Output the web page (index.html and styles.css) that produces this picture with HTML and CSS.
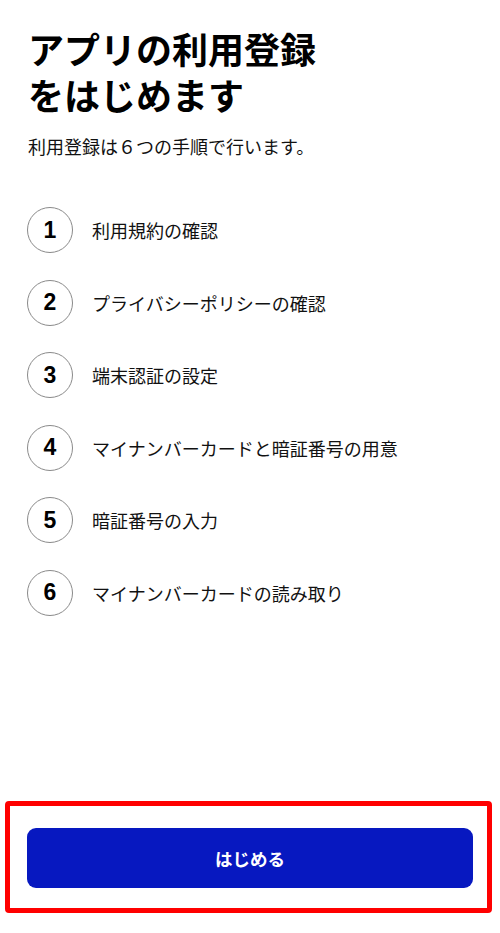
FILE: index.html
```html
<!DOCTYPE html>
<html lang="ja">
<head>
<meta charset="utf-8">
<title>アプリの利用登録をはじめます</title>
<link rel="stylesheet" href="styles.css">
</head>
<body>
<div class="page">
  <main class="content">
    <h1 class="title"><span class="title-line">アプリの利用登録</span><span class="title-line">をはじめます</span></h1>
    <p class="lead">利用登録は６つの手順で行います。</p>
    <ol class="steps">
      <li class="step"><span class="num">1</span><span class="label">利用規約の確認</span></li>
      <li class="step"><span class="num">2</span><span class="label">プライバシーポリシーの確認</span></li>
      <li class="step"><span class="num">3</span><span class="label">端末認証の設定</span></li>
      <li class="step"><span class="num">4</span><span class="label">マイナンバーカードと暗証番号の用意</span></li>
      <li class="step"><span class="num">5</span><span class="label">暗証番号の入力</span></li>
      <li class="step"><span class="num">6</span><span class="label">マイナンバーカードの読み取り</span></li>
    </ol>
  </main>
  <footer class="footer">
    <button class="start" type="button">はじめる</button>
  </footer>
</div>
</body>
</html>
```
FILE: styles.css
```css
* { box-sizing: border-box; }
html, body { margin: 0; padding: 0; background: #fff; }
body {
  font-family: "Noto Sans CJK JP", "Noto Sans", sans-serif;
  color: #111;
}
.page {
  height: 933px;
  display: flex;
  flex-direction: column;
}
.content {
  padding: 25px 27px 0 28px;
}
.title {
  margin: 0;
  font-size: 36px;
  line-height: 46px;
  font-weight: 700;
  color: #000;
  display: flex;
  flex-direction: column;
}
.title-line {
  display: block;
  height: 46px;
}
.lead {
  margin: 17px 0 0;
  font-size: 18px;
  line-height: 24px;
  color: #111;
}
.steps {
  list-style: none;
  margin: 49px 0 0;
  padding: 0;
  display: flex;
  flex-direction: column;
  gap: 26.5px;
}
.step {
  display: flex;
  align-items: center;
  gap: 19px;
}
.num {
  flex: none;
  width: 46px;
  height: 46px;
  margin-left: -1px;
  border: 1px solid #8a8a8a;
  border-radius: 50%;
  display: flex;
  align-items: center;
  justify-content: center;
  font-family: "Liberation Sans", Arial, sans-serif;
  font-weight: 700;
  font-size: 23px;
  color: #000;
}
.label {
  font-size: 18px;
  line-height: 24px;
  color: #111;
}
.footer {
  margin: auto 8px 20px 5px;
  border: 5px solid #ff0000;
  border-radius: 4px;
  padding: 22px 14px 20px 17px;
}
.start {
  display: block;
  width: 100%;
  height: 60px;
  border: 0;
  border-radius: 9px;
  background: #0718c0;
  color: #fff;
  font-family: "Noto Sans CJK JP", "Noto Sans", sans-serif;
  font-size: 17.5px;
  font-weight: 700;
}
```
